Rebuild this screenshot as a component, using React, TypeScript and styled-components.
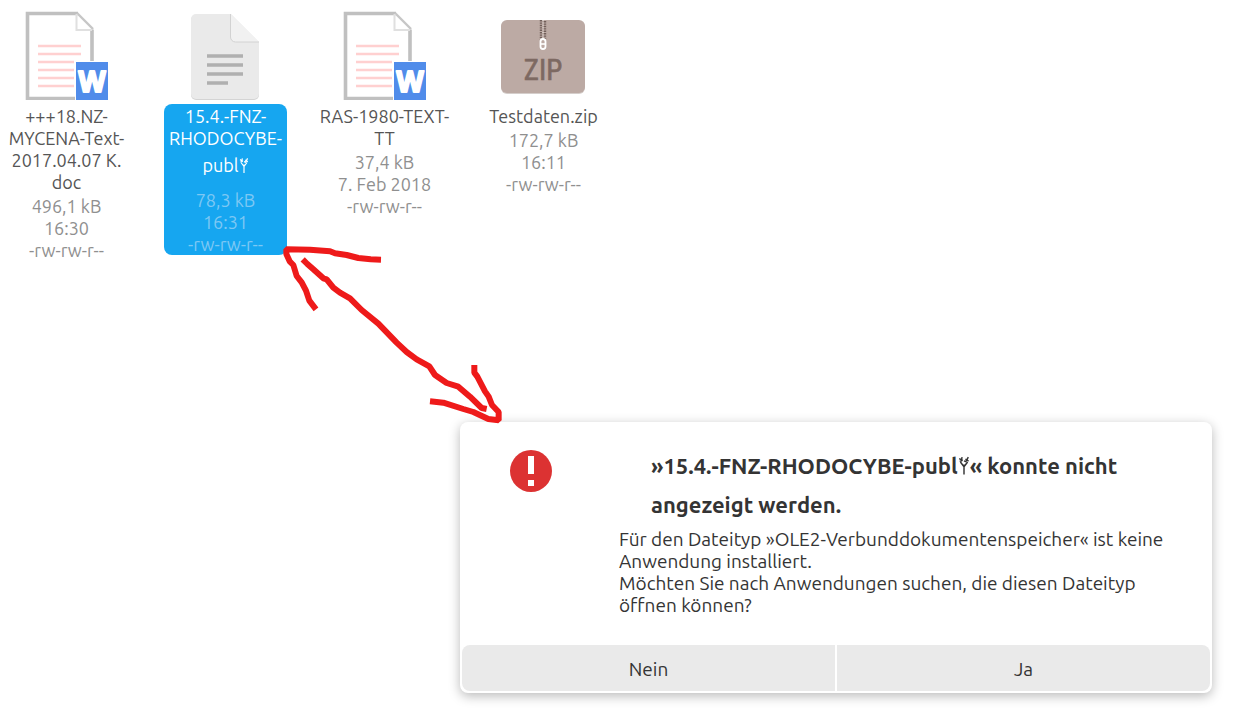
import React from "react";
import styled, { createGlobalStyle } from "styled-components";

const GlobalStyle = createGlobalStyle`
  *, *::before, *::after { box-sizing: border-box; }
  body {
    margin: 0;
    background: #fff;
    color: #343434;
    font-family: Ubuntu, "Noto Sans", "Open Sans", sans-serif;
    font-size: 18px;
    line-height: 22px;
  }
`;

const Desktop = styled.main`
  position: relative;
  display: flex;
  flex-direction: column;
  gap: 161px;
  padding: 8px 25px 20px 5px;
`;

const FileList = styled.ul`
  display: flex;
  align-items: flex-start;
  gap: 36px;
  margin: 0;
  padding: 0;
  list-style: none;
`;

const File = styled.li`
  display: flex;
  flex-direction: column;
  align-items: center;
  flex: none;
  width: 123px;
`;

const IconBox = styled.div`
  display: flex;
  justify-content: center;
  height: 96px;
`;

const Label = styled.div<{ $selected?: boolean }>`
  display: flex;
  flex-direction: column;
  align-items: center;
  gap: 2px;
  min-width: 100%;
  padding-top: 1px;
  border-radius: 8px;
  text-align: center;
  white-space: nowrap;
  color: ${(p) => (p.$selected ? "#fff" : "#555")};
  background: ${(p) => (p.$selected ? "#16a6f0" : "transparent")};
`;

const NameLine = styled.div<{ $tall?: boolean }>`
  height: ${(p) => (p.$tall ? "38px" : "22px")};
  line-height: ${(p) => (p.$tall ? "32px" : "22px")};
`;

const Meta = styled.div<{ $selected?: boolean }>`
  color: ${(p) => (p.$selected ? "#7dc8f4" : "#8f8f8f")};
`;

const Sprout = styled.svg<{ $size: number }>`
  width: ${(p) => p.$size / 2 + 2}px;
  height: ${(p) => p.$size}px;
  vertical-align: -1px;
`;

const Arrow = styled.svg`
  position: absolute;
  z-index: 1;
  top: 230px;
  left: 270px;
  width: 250px;
  height: 200px;
  pointer-events: none;
`;

const Dialog = styled.section`
  align-self: flex-end;
  width: 100%;
  max-width: 752px;
  padding: 2px;
  border-radius: 8px;
  background: #fff;
  box-shadow: 0 3px 12px rgba(0, 0, 0, 0.28);
`;

const DialogBody = styled.div`
  display: flex;
  align-items: flex-start;
  gap: 67px;
  padding: 22px 32px 29px 48px;
`;

const AlertIcon = styled.svg`
  flex: none;
  width: 42px;
  height: 42px;
  margin-top: 4px;
`;

const Title = styled.h1`
  margin: 0 0 4px;
  padding-left: 32px;
  font-size: 22px;
  line-height: 39px;
  white-space: nowrap;
`;

const Message = styled.p`
  margin: 0;
  font-size: 19px;
`;

const Actions = styled.div`
  display: grid;
  grid-template-columns: 1fr 1fr;
  gap: 2px;
  border-radius: 8px;
  overflow: hidden;
`;

const Action = styled.button`
  height: 46px;
  padding: 2px 0 0;
  border: 0;
  background: #eaeaea;
  color: inherit;
  font: inherit;
  font-size: 19px;
`;

function SproutGlyph({ size }: { size: number }) {
  return (
    <Sprout $size={size} viewBox="0 0 10 16" fill="none" stroke="currentColor" aria-hidden="true">
      <path d="M5 16V7.500M5 9.500L2 5.500M5 9.500L8 5.500" strokeWidth="1.200" />
      <path d="M1 2.600l3 1.600M3.400 1.400L2.600 5.200M1.400 5l2.400-.8M6.200 3l2.600 1.800M8.600 1.400L6.400 5.400M5 4.600l2 .8" strokeWidth="1.200" />
    </Sprout>
  );
}

function WordIcon() {
  return (
    <svg width="84" height="92" viewBox="0 0 84 92" aria-hidden="true">
      <path d="M2 6h51l13 15v69H2z" fill="#fff" />
      <path d="M53 5.500H2.500V90.500H50M67 54V21.500" fill="none" stroke="#c0c0c0" strokeWidth="3.600" />
      <path d="M52 5L68 21" stroke="#c6c6c6" strokeWidth="2.400" />
      <path d="M51.500 6V22H67" fill="none" stroke="#e0e0e0" strokeWidth="2" />
      <path d="M13 38h43M13 46h43M13 54h36M13 62h36M13 70h36M13 78h36" stroke="#ffd0d0" strokeWidth="2.600" />
      <path d="M50 53h34v39H50z" fill="#fff" />
      <path d="M51 54h32v38H51z" fill="#508cea" />
      <text x="67" y="84" fill="#fff" stroke="#fff" strokeWidth="2" strokeLinejoin="round" textAnchor="middle" fontFamily="'Noto Sans', 'Open Sans', sans-serif" fontWeight="700" fontSize="28">
        W
      </text>
    </svg>
  );
}

function TextIcon() {
  return (
    <svg width="69" height="92" viewBox="0 0 69 92" aria-hidden="true">
      <path d="M5 7h35l28 28v52a5 5 0 0 1-5 5H5a5 5 0 0 1-5-5V12a5 5 0 0 1 5-5z" fill="#d4d4d4" />
      <path d="M5 6h35l28 28v52a5 5 0 0 1-5 5H5a5 5 0 0 1-5-5V11a5 5 0 0 1 5-5z" fill="#eaeaea" />
      <path d="M39.500 6v23a5 5 0 0 0 5 5H68" fill="#f1f1f1" stroke="#d2d2d2" />
      <path d="M16 48h36M16 57h36M16 66h36M16 75h21" stroke="#b0b0b0" strokeWidth="3.400" />
    </svg>
  );
}

function ZipIcon() {
  return (
    <svg width="87" height="88" viewBox="0 0 87 88" aria-hidden="true">
      <rect x="1" y="13" width="84" height="73" rx="6" fill="#d5cecb" />
      <rect x="1" y="12" width="84" height="73" rx="6" fill="#bcaaa4" />
      <path d="M41 12v20M45 13v19" stroke="#705f5a" strokeWidth="2.400" strokeDasharray="1.400 1" />
      <path d="M43 12v20" stroke="#e6dfdc" strokeWidth="1.200" strokeDasharray="1 1.400" />
      <rect x="40.500" y="31" width="5" height="10" rx="2.500" fill="none" stroke="#fff" strokeWidth="1.800" />
      <path d="M41 36h4" stroke="#fff" strokeWidth="1.600" />
      <text x="43" y="72" fill="#7d6962" stroke="#7d6962" strokeWidth=".6" textAnchor="middle" fontFamily="'Roboto Condensed', 'Ubuntu Condensed', 'Liberation Sans Narrow', Roboto, sans-serif" fontSize="29">
        ZIP
      </text>
    </svg>
  );
}

type Entry = {
  lines: string[];
  meta: string[];
  icon: React.ReactNode;
  selected?: boolean;
};

const files: Entry[] = [
  {
    lines: ["+++18.NZ-", "MYCENA-Text-", "2017.04.07 K.", "doc"],
    meta: ["496,1 kB", "16:30", "-rw-rw-r--"],
    icon: <WordIcon />,
  },
  {
    lines: ["15.4.-FNZ-", "RHODOCYBE-", "publ"],
    meta: ["78,3 kB", "16:31", "-rw-rw-r--"],
    icon: <TextIcon />,
    selected: true,
  },
  {
    lines: ["RAS-1980-TEXT-", "TT"],
    meta: ["37,4 kB", "7. Feb 2018", "-rw-rw-r--"],
    icon: <WordIcon />,
  },
  {
    lines: ["Testdaten.zip"],
    meta: ["172,7 kB", "16:11", "-rw-rw-r--"],
    icon: <ZipIcon />,
  },
];

export default function App() {
  return (
    <>
      <GlobalStyle />
      <Desktop>
        <FileList>
          {files.map((file) => (
            <File key={file.lines[0]}>
              <IconBox>{file.icon}</IconBox>
              <Label $selected={file.selected}>
                <div>
                  {file.lines.map((line) => (
                    <NameLine key={line} $tall={line === "publ"}>
                      {line}
                      {line === "publ" && <SproutGlyph size={16} />}
                    </NameLine>
                  ))}
                </div>
                <Meta $selected={file.selected}>
                  {file.meta.map((line) => (
                    <div key={line}>{line}</div>
                  ))}
                </Meta>
              </Label>
            </File>
          ))}
        </FileList>

        <Arrow viewBox="0 0 750 600" fill="none" stroke="#ee1a1a" strokeWidth="18" strokeLinejoin="bevel" aria-hidden="true">
          <path d="M98 88L112 102L130 118L160 145L170 148L190 173L210 188L240 205L275 240L325 281L380 338L410 366L440 388L478 409L495 435L530 459L565 470L600 500L635 534L650 537" />
          <path d="M333 89L302 88L265 84L230 75L195 70L180 64L120 59L49 58V72L59 94L70 105L80 138L95 157L108 182L118 212L138 238" />
          <path d="M613 405V428L622 440L645 484L656 500L666 525L686 546V571L655 567L610 546L580 537L520 518L480 514" />
        </Arrow>

        <Dialog role="alertdialog" aria-labelledby="dialog-title" aria-describedby="dialog-message">
          <DialogBody>
            <AlertIcon viewBox="0 0 42 42" aria-hidden="true">
              <circle cx="21" cy="21" r="21" fill="#dc3232" />
              <path d="M18 6h6v18h-6zM18 30h6v6h-6z" fill="#fff" />
            </AlertIcon>
            <div>
              <Title id="dialog-title">
                »15.4.-FNZ-RHODOCYBE-publ
                <SproutGlyph size={20} />« konnte nicht
                <br />
                angezeigt werden.
              </Title>
              <Message id="dialog-message">
                Für den Dateityp »OLE2-Verbunddokumentenspeicher« ist keine
                <br />
                Anwendung installiert.
                <br />
                Möchten Sie nach Anwendungen suchen, die diesen Dateityp
                <br />
                öffnen können?
              </Message>
            </div>
          </DialogBody>
          <Actions>
            <Action type="button">Nein</Action>
            <Action type="button">Ja</Action>
          </Actions>
        </Dialog>
      </Desktop>
    </>
  );
}
